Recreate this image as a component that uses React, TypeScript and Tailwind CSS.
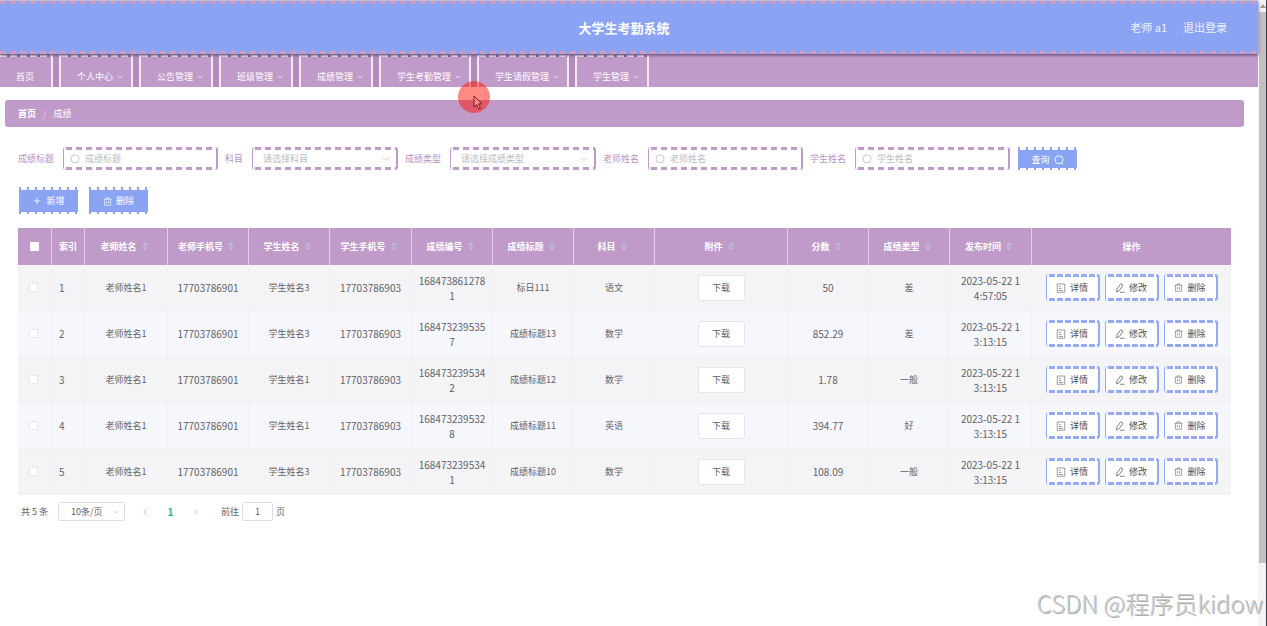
import React from "react";
import { ChevronDown, ChevronLeft, ChevronRight, Plus } from "lucide-react";

const navItems = ["个人中心", "公告管理", "班级管理", "成绩管理", "学生考勤管理", "学生请假管理", "学生管理"];

const columns = [
  { title: "老师姓名", width: "w-[83px]" },
  { title: "老师手机号", width: "w-[81px]" },
  { title: "学生姓名", width: "w-[81px]" },
  { title: "学生手机号", width: "w-[82px]" },
  { title: "成绩编号", width: "w-[81px]" },
  { title: "成绩标题", width: "w-[81px]" },
  { title: "科目", width: "w-[81px]" },
  { title: "附件", width: "w-[133px]" },
  { title: "分数", width: "w-[81px]" },
  { title: "成绩类型", width: "w-[81px]" },
  { title: "发布时间", width: "w-[82px]" },
];

const rows = [
  { student: "学生姓名3", phone: "17703786903", code: "168473861278\n1", title: "标日111", subject: "语文", score: "50", type: "差", time: "2023-05-22 1\n4:57:05" },
  { student: "学生姓名3", phone: "17703786903", code: "168473239535\n7", title: "成绩标题13", subject: "数学", score: "852.29", type: "差", time: "2023-05-22 1\n3:13:15" },
  { student: "学生姓名1", phone: "17703786903", code: "168473239534\n2", title: "成绩标题12", subject: "数学", score: "1.78", type: "一般", time: "2023-05-22 1\n3:13:15" },
  { student: "学生姓名1", phone: "17703786903", code: "168473239532\n8", title: "成绩标题11", subject: "英语", score: "394.77", type: "好", time: "2023-05-22 1\n3:13:15" },
  { student: "学生姓名3", phone: "17703786903", code: "168473239534\n1", title: "成绩标题10", subject: "数学", score: "108.09", type: "一般", time: "2023-05-22 1\n3:13:15" },
];

const purpleDashes =
  "rounded-[3px] border-l border-r-2 border-[#c09bc9] bg-[image:repeating-linear-gradient(90deg,transparent_0_2px,#c09bc9_2px_8px,transparent_8px_10px),repeating-linear-gradient(90deg,transparent_0_2px,#c09bc9_2px_8px,transparent_8px_10px)] bg-[size:100%_3px] bg-[position:top,bottom] bg-no-repeat";

const blueDashes =
  "rounded-[3px] border-l border-r-2 border-[#94abf3] bg-white bg-[image:repeating-linear-gradient(90deg,transparent_0_2px,#94abf3_2px_8px,transparent_8px),repeating-linear-gradient(90deg,transparent_0_2px,#94abf3_2px_8px,transparent_8px)] bg-[size:8px_3px] bg-[position:top_left,bottom_left] bg-repeat-x";

const notched =
  "bg-[image:repeating-linear-gradient(90deg,#8aa3f3_0_2px,transparent_2px_8px),linear-gradient(#8aa3f3,#8aa3f3)] bg-[size:100%_100%,100%_calc(100%-5px)] bg-center bg-no-repeat";

const headerDashes =
  "bg-[#8aa3f3] bg-[image:repeating-linear-gradient(90deg,#cc9cc4_0_6px,transparent_6px_10px),repeating-linear-gradient(90deg,#cc9cc4_0_6px,transparent_6px_10px)] bg-[size:100%_3px] bg-[position:top,bottom] bg-no-repeat";

const navDashes =
  "border-[#f3e8f3] bg-[#c09bc9] bg-[image:repeating-linear-gradient(90deg,#e9e2ea_0_7px,#8d6d96_7px_10px)] bg-[size:100%_2px] bg-top bg-no-repeat";

function SearchIcon({ className }: { className: string }) {
  return (
    <svg viewBox="0 0 20 20" className={className} fill="none" stroke="currentColor" strokeWidth="1.8" aria-hidden="true">
      <circle cx="10" cy="9.5" r="8" />
      <path d="M14.5 15.5l3 3.500" />
    </svg>
  );
}

function TrashIcon({ className }: { className: string }) {
  return (
    <svg viewBox="0 0 20 20" className={className} fill="none" stroke="currentColor" strokeWidth="1.5" aria-hidden="true">
      <path d="M1 5h18M6.500 5V2h7v3M3.500 5v13.500h13V5M8 9v5.500M12 9v5.500" />
    </svg>
  );
}

function DetailIcon() {
  return (
    <svg viewBox="0 0 20 20" className="h-2.5 w-2.5 text-[#77797f]" fill="none" stroke="currentColor" strokeWidth="1.5" aria-hidden="true">
      <path d="M2.500 2h15v16.500h-15zM6 7h3.500M6 11h5M6 15h8" />
    </svg>
  );
}

function EditIcon() {
  return (
    <svg viewBox="0 0 20 20" className="h-2.5 w-2.5" fill="none" stroke="currentColor" strokeWidth="1.4" aria-hidden="true">
      <path d="M11.500 1.500l4.500 2.800-7.500 11-5.500 2.500 1-6zM10 18.500h9" />
    </svg>
  );
}

function SortIcon() {
  return (
    <svg viewBox="0 0 6 9" className="h-[9px] w-1.5 fill-[#b9bfd0]" aria-hidden="true">
      <path d="M3 0.500L6 3.800H0zM3 8.500L0 5.200h6z" />
    </svg>
  );
}

function SearchField({ id, label }: { id: string; label: string }) {
  return (
    <div className="flex items-center gap-[9px]">
      <label htmlFor={id} className="text-[#b990c2]">{label}</label>
      <div className={`flex h-[23px] w-[155px] items-center gap-[5px] pl-1.5 ${purpleDashes}`}>
        <SearchIcon className="h-2.5 w-2.5 shrink-0 text-[#c0c4cc]" />
        <input id={id} placeholder={label} className="w-full min-w-0 bg-transparent text-[#606266] outline-none placeholder:text-[#b9bcc6]" />
      </div>
    </div>
  );
}

function SelectField({ id, label, placeholder }: { id: string; label: string; placeholder: string }) {
  return (
    <div className="flex items-center gap-[9px]">
      <label htmlFor={id} className="text-[#b990c2]">{label}</label>
      <div className={`flex h-[23px] w-[146px] items-center pr-1 pl-2.5 ${purpleDashes}`}>
        <select id={id} className="w-full appearance-none bg-transparent text-[#b9bcc6] outline-none">
          <option>{placeholder}</option>
        </select>
        <ChevronDown className="h-3 w-3 shrink-0 text-[#c0c4cc]" strokeWidth={1.8} />
      </div>
    </div>
  );
}

function Cell({ children, digits = false }: { children: React.ReactNode; digits?: boolean }) {
  return (
    <td className={`border-r border-b border-[#efeff5] text-center leading-[15px] whitespace-pre-line ${digits ? "text-[10px]" : ""}`}>
      {children}
    </td>
  );
}

export default function App() {
  return (
    <div className="flex min-h-screen bg-white font-['Noto_Sans_CJK_SC',sans-serif] text-[9px] text-[#606266]">
      <div className="min-w-0 flex-1">
        <div className="border-t border-[#d5d5e3]">
          <header className={`relative grid h-[53px] grid-cols-[1fr_auto_1fr] items-center pr-2.5 shadow-[0_1px_3px_#55406b] ${headerDashes}`}>
            <h1 className="col-start-2 text-[13px] font-bold text-white">大学生考勤系统</h1>
            <div className="flex justify-end gap-4 pr-[21px] text-[11px] text-[#eef1ff]">
              <span>老师 a1</span>
              <a href="#logout">退出登录</a>
            </div>
          </header>
        </div>

        <nav className="flex h-[33px] gap-1.5 bg-[#c09bc9] pt-px text-white">
          <div className="flex gap-1.5 bg-[#b38cbc]">
            <a href="#home" className={`flex items-center border-r-2 pt-3 pr-[17px] pl-4 ${navDashes}`}>首页</a>
            {navItems.map((item) => (
              <a key={item} href="#menu" className={`flex items-center gap-[3px] border-x-2 pt-3 pr-[7px] pl-4 ${navDashes}`}>
                {item}
                <ChevronDown className="h-2 w-2" />
              </a>
            ))}
          </div>
        </nav>

        <div className="mt-[13px] mr-3.5 ml-[5px] flex h-[27px] items-center gap-[7px] rounded-[3px] bg-[#c09bc9] px-[13px] text-white">
          <a href="#home" className="font-bold">首页</a>
          <span className="text-[#dcd5ea]">/</span>
          <span>成绩</span>
        </div>

        <main className="pr-[27px] pl-[18px]">
          <form className="mt-5 flex flex-wrap items-center gap-[7px]">
            <SearchField id="title" label="成绩标题" />
            <SelectField id="subject" label="科目" placeholder="请选择科目" />
            <SelectField id="type" label="成绩类型" placeholder="请选择成绩类型" />
            <SearchField id="teacher" label="老师姓名" />
            <SearchField id="student" label="学生姓名" />
            <button type="button" className={`ml-px flex h-[23px] w-[59px] items-center justify-center gap-1 pt-[3px] text-white ${notched}`}>
              查询
              <SearchIcon className="h-2.5 w-2.5" />
            </button>
          </form>

          <div className="mt-[17px] flex gap-[11px] pl-px">
            <button type="button" className={`flex h-[27px] w-[59px] items-center justify-center gap-1 pt-px text-white ${notched}`}>
              <Plus className="h-2.5 w-2.5" />
              新增
            </button>
            <button type="button" className={`flex h-[27px] w-[59px] items-center justify-center gap-1 pt-px text-white ${notched}`}>
              <TrashIcon className="h-[9px] w-[9px]" />
              删除
            </button>
          </div>

          <table className="mt-3.5 w-full table-fixed border-separate border-spacing-0">
            <thead>
              <tr className="h-[37px] bg-[#c09bc9] text-white">
                <th className="w-[34px] border-r border-[#e2d0e8] px-0">
                  <input type="checkbox" aria-label="全选" className="ml-3 block h-[9px] w-[9px] appearance-none bg-white" />
                </th>
                <th className="w-[33px] border-r border-[#e2d0e8]">索引</th>
                {columns.map((c) => (
                  <th key={c.title} className={`border-r border-[#e2d0e8] pr-1 ${c.width}`}>
                    <span className="flex items-center justify-center gap-[5px]">
                      {c.title}
                      <SortIcon />
                    </span>
                  </th>
                ))}
                <th className="w-[199px]">操作</th>
              </tr>
            </thead>
            <tbody>
              {rows.map((r, i) => (
                <tr key={r.code} className="h-[46px] odd:bg-[#f4f4f6] even:bg-[#f6f6fd]">
                  <td className="border-r border-b border-[#efeff5]">
                    <input type="checkbox" aria-label={`选择第${i + 1}行`} className="ml-[11px] block h-[9px] w-[9px] appearance-none rounded-[1px] border border-[#e6e6ea] bg-white" />
                  </td>
                  <td className="border-r border-b border-[#efeff5] pl-[7px] text-[10px]">{i + 1}</td>
                  <Cell>老师姓名1</Cell>
                  <Cell digits>17703786901</Cell>
                  <Cell>{r.student}</Cell>
                  <Cell digits>{r.phone}</Cell>
                  <Cell digits>{r.code}</Cell>
                  <Cell>{r.title}</Cell>
                  <Cell>{r.subject}</Cell>
                  <Cell>
                    <button type="button" className="h-[26px] w-[47px] rounded-[3px] border border-[#e4e5ea] bg-white">下载</button>
                  </Cell>
                  <Cell digits>{r.score}</Cell>
                  <Cell>{r.type}</Cell>
                  <Cell digits>{r.time}</Cell>
                  <td className="border-b border-[#efeff5]">
                    <div className="flex justify-center gap-[5px] text-[#4d4f55]">
                      <button type="button" className={`flex h-[27px] w-[54px] items-center justify-center gap-1 ${blueDashes}`}>
                        <DetailIcon />
                        详情
                      </button>
                      <button type="button" className={`flex h-[27px] w-[54px] items-center justify-center gap-1 ${blueDashes}`}>
                        <EditIcon />
                        修改
                      </button>
                      <button type="button" className={`flex h-[27px] w-[54px] items-center justify-center gap-1 ${blueDashes}`}>
                        <TrashIcon className="h-[9px] w-[9px] text-[#77797f]" />
                        删除
                      </button>
                    </div>
                  </td>
                </tr>
              ))}
            </tbody>
          </table>

          <div className="mt-[7px] flex h-[19px] items-center pl-[3px]">
            <span className="w-[37px]">共 5 条</span>
            <label className="flex h-[19px] w-[67px] items-center rounded-[2px] border border-[#dcdfe6] pr-1 pl-3">
              <select aria-label="每页条数" className="w-full appearance-none bg-transparent outline-none">
                <option>10条/页</option>
              </select>
              <ChevronDown className="h-2 w-2 shrink-0 text-[#c0c4cc]" />
            </label>
            <button type="button" aria-label="上一页" className="ml-[15px] text-[#b4b6bd]">
              <ChevronLeft className="h-2.5 w-2.5" />
            </button>
            <button type="button" className="w-[41px] text-center text-[10px] font-bold text-[#1fb395]">1</button>
            <button type="button" aria-label="下一页" className="text-[#b4b6bd]">
              <ChevronRight className="h-2.5 w-2.5" />
            </button>
            <label htmlFor="page" className="mr-[3px] ml-5">前往</label>
            <input id="page" defaultValue="1" className="h-[19px] w-[31px] rounded-[2px] border border-[#dcdfe6] text-center outline-none" />
            <span className="ml-[3px]">页</span>
          </div>
        </main>
      </div>

      <div className="flex w-[9px] flex-col border-r border-[#3a3840] bg-[#f5f3f6] pl-px" aria-hidden="true">
        <div className="flex h-3 items-center justify-center">
          <svg viewBox="0 0 6 4" className="h-1 w-1.5 fill-[#9a9a9a]">
            <path d="M3 0l3 4H0z" />
          </svg>
        </div>
        <div className="h-[88vh] bg-[#c2c0c3]" />
      </div>

      <div className="absolute top-[81px] left-[458px] h-8 w-8 rounded-full bg-[#ff1408]/50" aria-hidden="true">
        <svg viewBox="0 0 10 16" className="absolute top-[14px] left-[15px] h-4 w-2.5 fill-[#f58f86] stroke-[#7c1f24]">
          <path d="M1 1v11l2.600-2.400 2 4.600 1.900-.9-2-4.400H9z" />
        </svg>
      </div>

      <div className="absolute right-1 bottom-1.5 text-[24px] leading-[34px] font-light text-[#cbcbcb] [text-shadow:1px_1px_0_#adadad,-1px_-1px_0_#ffffff]">
        CSDN @程序员kidow
      </div>
    </div>
  );
}
